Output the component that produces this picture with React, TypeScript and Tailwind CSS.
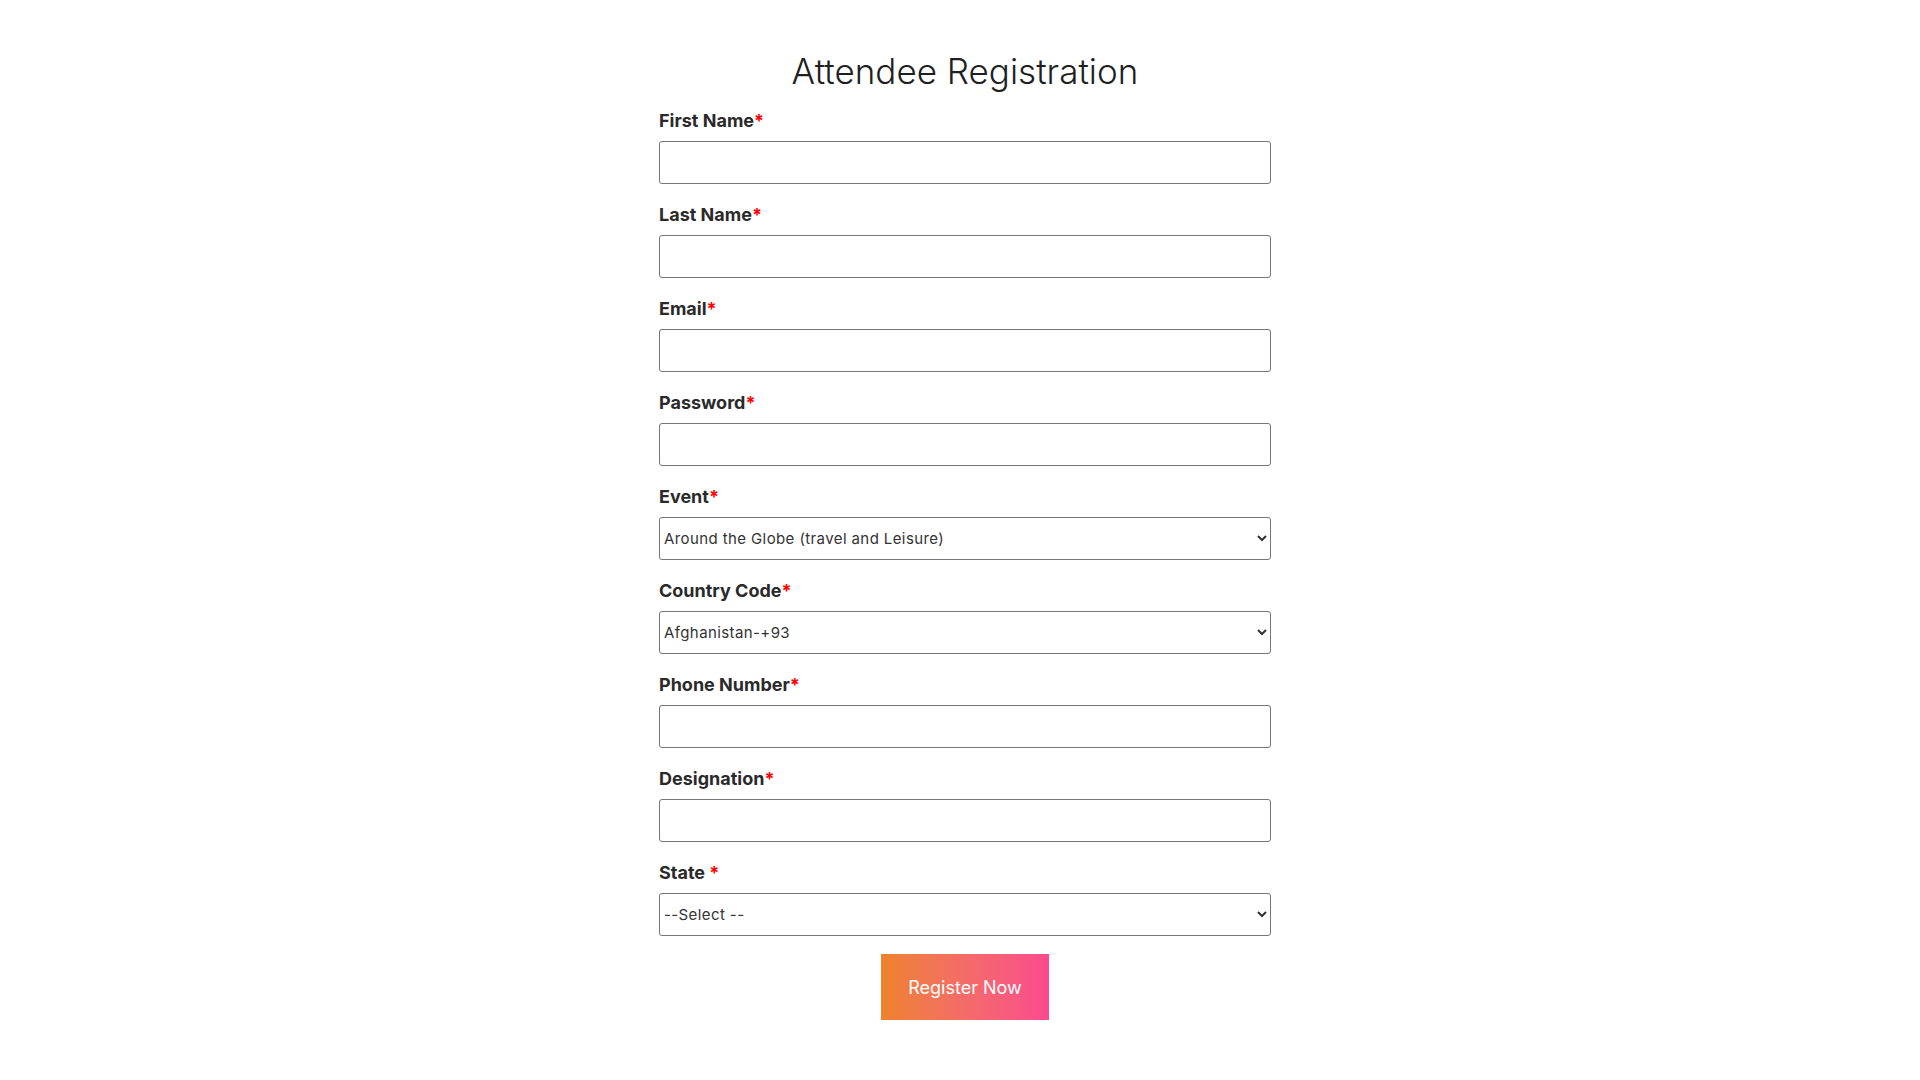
import React from "react";

const fields: { label: string; type: "text" | "select"; space?: boolean; options?: string[] }[] = [
    { label: "First Name", type: "text" },
    { label: "Last Name", type: "text" },
    { label: "Email", type: "text" },
    { label: "Password", type: "text" },
    { label: "Event", type: "select", options: ["Around the Globe (travel and Leisure)"] },
    { label: "Country Code", type: "select", options: ["Afghanistan-+93"] },
    { label: "Phone Number", type: "text" },
    { label: "Designation", type: "text" },
    { label: "State", type: "select", space: true, options: ["--Select --"] },
];

export default function App() {
    return (
        <div className="min-h-screen bg-white flex justify-center pl-[10px] font-['Inter',sans-serif] text-[#222]">
            <div className="w-[612px] pt-[51px]">
                <h1 className="text-center text-[35px] leading-[40px] font-light text-[#1f1f1f]">
                    Attendee Registration
                </h1>

                <form className="mt-[18px]" onSubmit={(e) => e.preventDefault()}>
                    {fields.map((f) => (
                        <div key={f.label} className="mb-[19px]">
                            <label className="block text-[18px] leading-[24px] font-bold text-[#2a2a2a] mb-2">
                                {f.label}
                                {f.space ? " " : ""}
                                <span className="text-[#f00]">*</span>
                            </label>
                            {f.type === "text" ? (
                                <input
                                    type={f.label === "Password" ? "password" : "text"}
                                    className="block w-full h-[43px] border border-[#767676] rounded-[3px] px-2 text-[15px] bg-white"
                                />
                            ) : (
                                <select className="block w-full h-[43px] border border-[#767676] rounded-[3px] px-0 text-[15px] tracking-[0.4px] text-[#333] bg-white">
                                    {f.options!.map((o) => (
                                        <option key={o}>{o}</option>
                                    ))}
                                </select>
                            )}
                        </div>
                    ))}

                    <div className="flex justify-center -mt-px">
                        <button
                            type="submit"
                            className="w-[168px] h-[66px] bg-linear-to-r from-[#ee832a] to-[#fa4a8e] text-white text-[18px]"
                        >
                            Register Now
                        </button>
                    </div>
                </form>
            </div>
        </div>
    );
}
